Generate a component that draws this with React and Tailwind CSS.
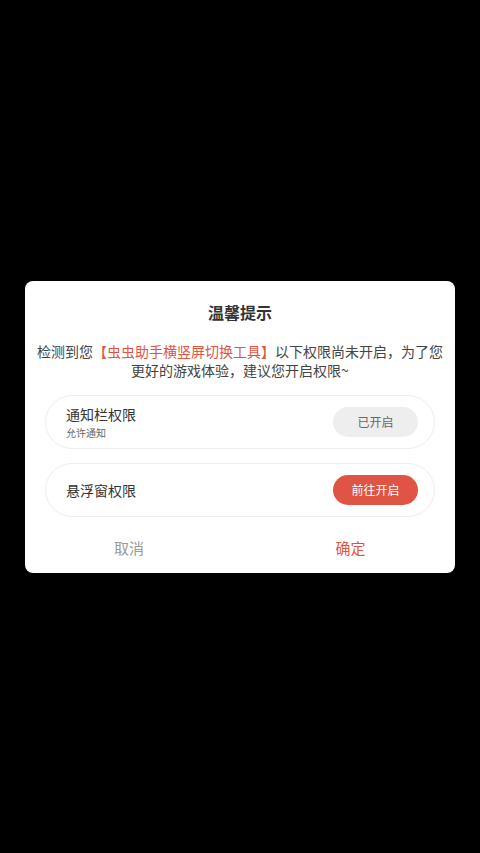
export default function App() {
  const font = { fontFamily: '"Noto Sans CJK SC", "Noto Sans", sans-serif' };
  return (
    <div className="w-[480px] h-[853px] bg-black flex items-center justify-center" style={font}>
      <div className="w-[430px] bg-white rounded-[8px] flex flex-col items-center pt-[19px]">
        <h2 className="text-[16px] leading-[24px] font-bold text-[#333]">温馨提示</h2>
        <p className="mt-[18px] px-[12px] text-center text-[14px] leading-[19px] text-[#444]">
          检测到您<span className="text-[#e05444]">【虫虫助手横竖屏切换工具】</span>以下权限尚未开启，为了您更好的游戏体验，建议您开启权限~
        </p>
        <div className="mt-[15px] w-[390px] flex flex-col gap-[14px]">
          <div className="h-[54px] rounded-full border border-[#ededed] flex items-center justify-between pl-[20px] pr-[16px]">
            <div className="flex flex-col">
              <span className="text-[14px] leading-[20px] text-[#333]">通知栏权限</span>
              <span className="mt-[2px] text-[10px] leading-[14px] text-[#666]">允许通知</span>
            </div>
            <button className="w-[85px] h-[30px] rounded-full bg-[#eeeeee] text-[12px] text-[#666]">已开启</button>
          </div>
          <div className="h-[54px] rounded-full border border-[#ededed] flex items-center justify-between pl-[20px] pr-[16px]">
            <span className="text-[14px] leading-[20px] text-[#333]">悬浮窗权限</span>
            <button className="w-[85px] h-[30px] rounded-full bg-[#e05444] text-[12px] text-white">前往开启</button>
          </div>
        </div>
        <div className="mt-[10px] mb-[2px] w-full h-[44px] grid grid-cols-2 text-[15px]">
          <button className="text-[#999] pr-[7px]">取消</button>
          <button className="text-[#e05444] pl-[6px]">确定</button>
        </div>
      </div>
    </div>
  );
}
